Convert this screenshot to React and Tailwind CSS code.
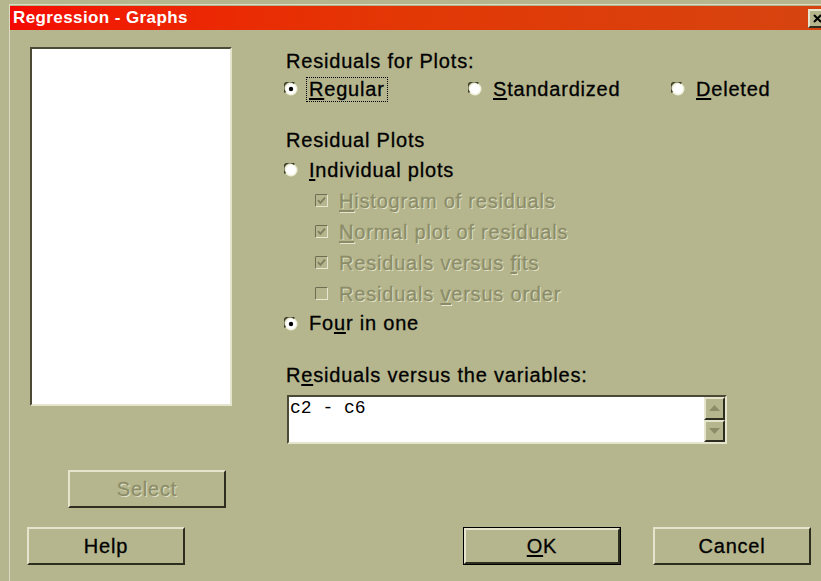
import React from "react";

// Win95-style bevels, reused by buttons, fields and the scroll arrows
const raised =
  "border-2 border-t-[#e4e5cc] border-l-[#e4e5cc] border-b-[#2e2e20] border-r-[#2e2e20]";
const sunken =
  "border-2 border-t-[#4a4a36] border-l-[#4a4a36] border-b-[#e4e5cc] border-r-[#e4e5cc]";
const disabledText = "text-[#8c8d68] [text-shadow:1px_1px_0_#e6e7ce]";

const Radio = ({ checked }) => (
  <svg width="14" height="14" viewBox="0 0 14 14" className="shrink-0">
    <circle cx="7" cy="7" r="6.5" fill="#eeefd8" />
    <path d="M1.4 10.4 A6.2 6.2 0 0 1 10.4 1.4" stroke="#3c3c2c" strokeWidth="1.6" fill="none" />
    <circle cx="7" cy="7" r="5" fill="#ffffff" />
    {checked && <circle cx="7" cy="7" r="2.2" fill="#000000" />}
  </svg>
);

const Check = ({ checked }) => (
  <svg width="13" height="13" viewBox="0 0 13 13" className="shrink-0">
    <rect x="0.5" y="0.5" width="12" height="12" fill="#b5b68e" stroke="#e6e7ce" />
    <path d="M0.5 12.5 V0.5 H12.5" stroke="#6e6f52" fill="none" />
    {checked && (
      <path d="M3 6.2 L5.4 8.8 L10 3.6" stroke="#7e7f5e" strokeWidth="1.9" fill="none" />
    )}
  </svg>
);

const RadioOption = ({ checked, focused, children, className = "" }) => (
  <div className={`flex items-center ${className}`}>
    <Radio checked={checked} />
    <span
      className={`ml-[8px] px-[2px] leading-[23px] ${
        focused ? "border border-dotted border-black" : "border border-transparent"
      }`}
    >
      {children}
    </span>
  </div>
);

const CheckOption = ({ checked, children }) => (
  <div className="flex items-center h-[31px] pl-[31px]">
    <Check checked={checked} />
    <span className={`ml-[11px] ${disabledText}`}>{children}</span>
  </div>
);

const Button = ({ children, className = "", disabled, isDefault }) => (
  <div className={`${className} ${isDefault ? "border border-black" : ""}`}>
    <div
      className={`w-full h-full flex items-center justify-center bg-[#b5b68e] ${raised} ${
        disabled ? disabledText : "text-black"
      }`}
    >
      {children}
    </div>
  </div>
);

const ScrollArrow = ({ up }) => (
  <div className={`flex-1 flex items-center justify-center bg-[#b5b68e] ${raised}`}>
    <svg width="11" height="6" viewBox="0 0 11 6">
      <path d={up ? "M0 6 L5.5 0 L11 6 Z" : "M0 0 L5.5 6 L11 0 Z"} fill="#8c8d68" />
    </svg>
  </div>
);

export default function App() {
  return (
    <div className="w-[821px] h-[581px] overflow-hidden bg-[#b5b68e] font-['Liberation_Sans',Arial,sans-serif] text-[20px] tracking-[0.8px] text-black [-webkit-text-stroke:0.3px_currentColor]">
      <div className="ml-[9px] mt-[4px] w-[820px] h-[600px] border-l border-t border-[#dcdcc4]">
        {/* title bar */}
        <div className="mt-[1px] h-[24px] w-[818px] flex items-center justify-between bg-linear-to-r from-[#f40800] via-[#e23806] to-[#d6440f]">
          <span className="pl-[3px] text-white font-bold text-[17px] tracking-[0.4px] [-webkit-text-stroke:0px]">
            Regression - Graphs
          </span>
          <div className={`mr-[1px] w-[19px] h-[19px] flex items-center justify-center bg-[#b5b68e] ${raised}`}>
            <svg width="9" height="9" viewBox="0 0 9 9">
              <path d="M1 1 L8 8 M8 1 L1 8" stroke="#000" strokeWidth="2" />
            </svg>
          </div>
        </div>

        <div className="flex">
          {/* variable list and its buttons */}
          <div className="w-[274px] shrink-0 flex flex-col">
            <div className={`ml-[20px] mt-[17px] w-[202px] h-[359px] bg-white ${sunken}`} />
            <Button className="ml-[58px] mt-[64px] w-[158px] h-[38px]" disabled>
              Select
            </Button>
            <Button className="ml-[17px] mt-[19px] w-[158px] h-[38px]">Help</Button>
          </div>

          {/* options */}
          <div className="flex flex-col">
            <div className="mt-[20px] h-[22px] flex items-center pl-[2px]">Residuals for Plots:</div>
            <div className="mt-[4px] h-[26px] flex items-center">
              <RadioOption checked focused className="w-[184px]">
                <u className="underline-offset-2">R</u>egular
              </RadioOption>
              <RadioOption className="w-[203px]">
                <u className="underline-offset-2">S</u>tandardized
              </RadioOption>
              <RadioOption>
                <u className="underline-offset-2">D</u>eleted
              </RadioOption>
            </div>

            <div className="mt-[27px] h-[22px] flex items-center pl-[2px]">Residual Plots</div>
            <RadioOption className="mt-[4px] h-[30px]">
              <u className="underline-offset-2">I</u>ndividual plots
            </RadioOption>
            <CheckOption checked>
              <u className="underline-offset-2">H</u>istogram of residuals
            </CheckOption>
            <CheckOption checked>
              <u className="underline-offset-2">N</u>ormal plot of residuals
            </CheckOption>
            <CheckOption checked>
              Residuals versus <u className="underline-offset-2">f</u>its
            </CheckOption>
            <CheckOption>
              Residuals <u className="underline-offset-2">v</u>ersus order
            </CheckOption>
            <RadioOption checked className="h-[29px]">
              Fo<u className="underline-offset-2">u</u>r in one
            </RadioOption>

            <div className="mt-[26px] h-[22px] flex items-center pl-[2px]">
              R<u className="underline-offset-2">e</u>siduals versus the variables:
            </div>
            <div className={`mt-[9px] ml-[3px] w-[440px] h-[49px] flex bg-white ${sunken}`}>
              <div className="flex-1 pl-[1px] font-['Liberation_Mono',monospace] text-[18px] tracking-normal leading-[22px] [-webkit-text-stroke:0px]">
                c2 - c6
              </div>
              <div className="w-[21px] flex flex-col">
                <ScrollArrow up />
                <ScrollArrow />
              </div>
            </div>

            <div className="mt-[83px] flex">
              <Button isDefault className="ml-[179px] w-[158px] h-[38px]">
                <u className="underline-offset-2">O</u>K
              </Button>
              <Button className="ml-[32px] w-[158px] h-[38px]">Cancel</Button>
            </div>
          </div>
        </div>
      </div>
    </div>
  );
}
